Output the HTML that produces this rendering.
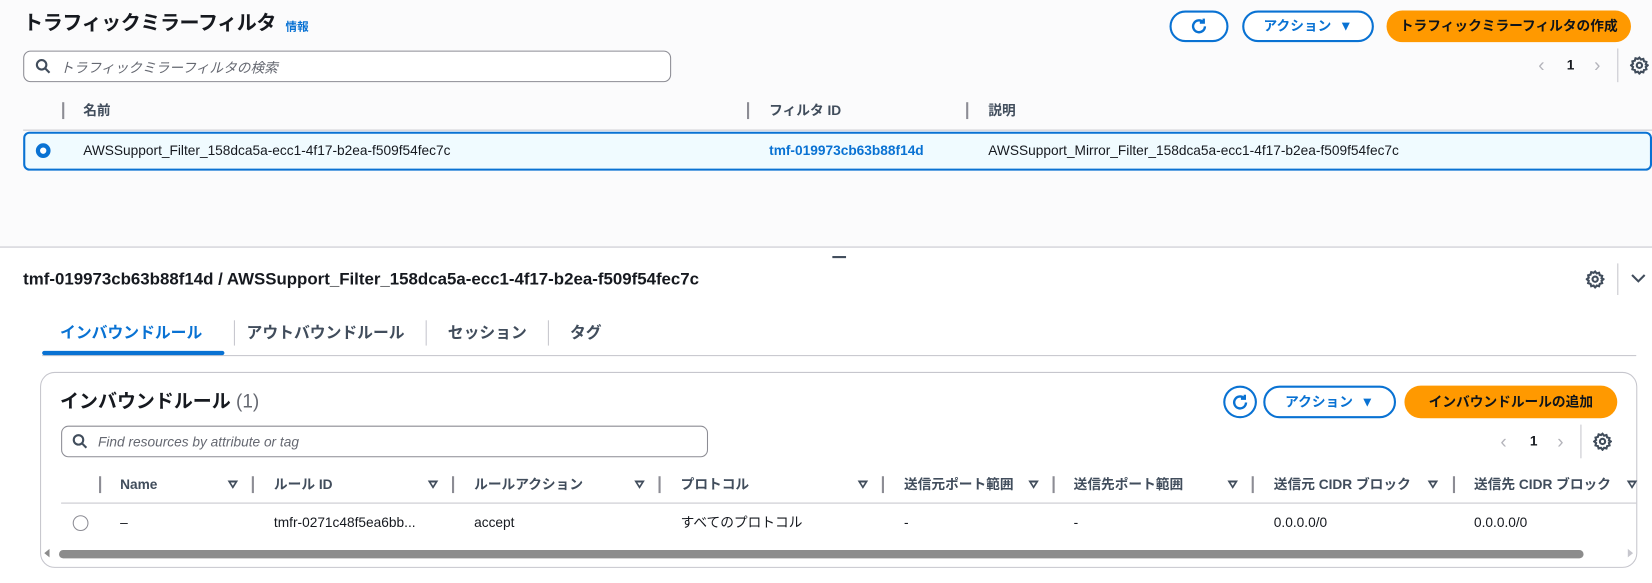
<!DOCTYPE html>
<html><head><meta charset="utf-8"><style>
*{box-sizing:border-box;margin:0;padding:0}
html,body{width:1652px;height:582px;overflow:hidden;background:#fff}
#w{position:absolute;left:0;top:0;width:1568px;height:553px;transform:scale(1.0536);transform-origin:0 0;font-family:"Liberation Sans","Noto Sans CJK JP",sans-serif;color:#16191f;font-size:13px}
.a{position:absolute;white-space:nowrap;line-height:16px}
.top{position:absolute;left:0;top:0;width:1568px;height:235px;background:#fbfbfc;border-bottom:1px solid #c6c6cd}
.btn{position:absolute;border:2px solid #0972d3;border-radius:20px;color:#0972d3;font-weight:bold;font-size:13px;display:flex;align-items:center;justify-content:center;background:#fff;line-height:16px}
.pri{position:absolute;background:#ff9900;border-radius:20px;color:#0f141a;font-weight:bold;font-size:13px;display:flex;align-items:center;justify-content:center;line-height:16px}
.search{position:absolute;border:1px solid #8c8c94;border-radius:7px;background:#fff;font-style:italic;color:#656871;font-size:13px;display:flex;align-items:center;padding-left:34px}
.sep{position:absolute;width:2px;height:16px;background:#8c8c94}
.hd{position:absolute;font-weight:bold;font-size:13px;color:#414d5c;white-space:nowrap;line-height:16px}
.tri{position:absolute;width:0;height:0;border-left:5px solid transparent;border-right:5px solid transparent;border-top:8px solid #414d5c}
.tri:after{content:"";position:absolute;left:-2px;top:-6px;border-left:2px solid transparent;border-right:2px solid transparent;border-top:3px solid #fff}
</style></head><body><div id="w">
<div class="top"></div>
<div class="a" style="left:22px;top:12px;font-size:19px;line-height:22px;font-weight:bold;letter-spacing:-0.4px">トラフィックミラーフィルタ</div>
<div class="a" style="left:271px;top:19px;font-size:11px;line-height:14px;font-weight:bold;color:#0972d3">情報</div>
<div class="btn" style="left:1110px;top:10px;width:56px;height:30px"><svg width="18" height="18" viewBox="0 0 16 16" fill="none" stroke="#0972d3" stroke-width="2"><path d="M13 8a5 5 0 1 1-1.6-3.7"/><path d="M12 1.5v3.3H8.7"/></svg></div>
<div class="btn" style="left:1179px;top:10px;width:125px;height:30px">アクション&nbsp;&nbsp;▼</div>
<div class="pri" style="left:1316px;top:10px;width:232px;height:30px">トラフィックミラーフィルタの作成</div>
<div class="search" style="left:22px;top:48px;width:615px;height:30px">トラフィックミラーフィルタの検索</div>
<svg class="a" style="left:33px;top:55px" width="16" height="16" viewBox="0 0 16 16" fill="none" stroke="#414d5c" stroke-width="2"><circle cx="6.5" cy="6.5" r="4.5"/><path d="M10 10l4 4"/></svg>
<div class="a" style="left:1460px;top:52px;color:#b4b4bb;font-size:18px;line-height:20px">‹</div>
<div class="a" style="left:1487px;top:54px;font-weight:bold">1</div>
<div class="a" style="left:1513px;top:52px;color:#b4b4bb;font-size:18px;line-height:20px">›</div>
<div class="a" style="left:1535px;top:46px;width:1px;height:32px;background:#c6c6cd"></div>
<svg class="a" style="left:1547px;top:53px" width="18" height="18" viewBox="0 0 16 16" fill="none" stroke="#414d5c" stroke-width="1.8"><circle cx="8" cy="8" r="2.2"/><path d="M8 1.5l1.3 1.6 2-.5.6 2 2 .6-.5 2L15 8l-1.6 1.3.5 2-2 .6-.6 2-2-.5L8 15l-1.3-1.6-2 .5-.6-2-2-.6.5-2L1 8l1.6-1.3-.5-2 2-.6.6-2 2 .5z"/></svg>
<div class="sep" style="left:59px;top:97px"></div>
<div class="sep" style="left:709px;top:97px"></div>
<div class="sep" style="left:917px;top:97px"></div>
<div class="hd" style="left:79px;top:97px">名前</div>
<div class="hd" style="left:730px;top:97px">フィルタ ID</div>
<div class="hd" style="left:938px;top:97px">説明</div>
<div class="a" style="left:22px;top:123px;width:1546px;height:1px;background:#c6c6cd"></div>
<div class="a" style="left:22px;top:125px;width:1546px;height:37px;border:2px solid #0972d3;border-radius:6px;background:#f0fbff"></div>
<div class="a" style="left:34px;top:136px;width:14px;height:14px;border-radius:50%;border:4px solid #0972d3;background:#fff"></div>
<div class="a" style="left:79px;top:135px">AWSSupport_Filter_158dca5a-ecc1-4f17-b2ea-f509f54fec7c</div>
<div class="a" style="left:730px;top:135px;color:#0972d3;font-weight:bold">tmf-019973cb63b88f14d</div>
<div class="a" style="left:938px;top:135px">AWSSupport_Mirror_Filter_158dca5a-ecc1-4f17-b2ea-f509f54fec7c</div>
<div class="a" style="left:790px;top:243px;width:13px;height:2px;background:#414d5c"></div>

<div class="a" style="left:22px;top:256px;font-size:16px;line-height:19px;font-weight:bold">tmf-019973cb63b88f14d / AWSSupport_Filter_158dca5a-ecc1-4f17-b2ea-f509f54fec7c</div>
<svg class="a" style="left:1505px;top:256px" width="18" height="18" viewBox="0 0 16 16" fill="none" stroke="#414d5c" stroke-width="1.8"><circle cx="8" cy="8" r="2.2"/><path d="M8 1.5l1.3 1.6 2-.5.6 2 2 .6-.5 2L15 8l-1.6 1.3.5 2-2 .6-.6 2-2-.5L8 15l-1.3-1.6-2 .5-.6-2-2-.6.5-2L1 8l1.6-1.3-.5-2 2-.6.6-2 2 .5z"/></svg>
<div class="a" style="left:1535px;top:250px;width:1px;height:30px;background:#c6c6cd"></div>
<svg class="a" style="left:1548px;top:259px" width="14" height="10" viewBox="0 0 14 10" fill="none" stroke="#414d5c" stroke-width="2"><path d="M1 2l6 6 6-6"/></svg>

<div class="a" style="left:57px;top:307px;font-size:15px;line-height:20px;font-weight:bold;color:#0972d3">インバウンドルール</div>
<div class="a" style="left:234px;top:307px;font-size:15px;line-height:20px;font-weight:bold;color:#414d5c">アウトバウンドルール</div>
<div class="a" style="left:425px;top:307px;font-size:15px;line-height:20px;font-weight:bold;color:#414d5c">セッション</div>
<div class="a" style="left:541px;top:307px;font-size:15px;line-height:20px;font-weight:bold;color:#414d5c">タグ</div>
<div class="a" style="left:222px;top:304px;width:1px;height:24px;background:#c6c6cd"></div>
<div class="a" style="left:404px;top:304px;width:1px;height:24px;background:#c6c6cd"></div>
<div class="a" style="left:520px;top:304px;width:1px;height:24px;background:#c6c6cd"></div>
<div class="a" style="left:40px;top:337px;width:1513px;height:1px;background:#c6c6cd"></div>
<div class="a" style="left:40px;top:333px;width:173px;height:4px;background:#0972d3;border-radius:2px"></div>

<div class="a" style="left:38px;top:353px;width:1516px;height:186px;border:1px solid #c6c6cd;border-radius:14px"></div>
<div class="a" style="left:57px;top:369px;font-size:18px;line-height:24px;font-weight:bold">インバウンドルール <span style="font-weight:normal;color:#656871">(1)</span></div>
<div class="btn" style="left:1161px;top:366px;width:32px;height:31px;border-radius:50%"><svg width="18" height="18" viewBox="0 0 16 16" fill="none" stroke="#0972d3" stroke-width="2"><path d="M13 8a5 5 0 1 1-1.6-3.7"/><path d="M12 1.5v3.3H8.7"/></svg></div>
<div class="btn" style="left:1199px;top:366px;width:126px;height:31px">アクション&nbsp;&nbsp;▼</div>
<div class="pri" style="left:1333px;top:366px;width:202px;height:31px">インバウンドルールの追加</div>
<div class="search" style="left:58px;top:404px;width:614px;height:30px">Find resources by attribute or tag</div>
<svg class="a" style="left:68px;top:411px" width="16" height="16" viewBox="0 0 16 16" fill="none" stroke="#414d5c" stroke-width="2"><circle cx="6.5" cy="6.5" r="4.5"/><path d="M10 10l4 4"/></svg>
<div class="a" style="left:1424px;top:409px;color:#b4b4bb;font-size:18px;line-height:20px">‹</div>
<div class="a" style="left:1452px;top:411px;font-weight:bold">1</div>
<div class="a" style="left:1478px;top:409px;color:#b4b4bb;font-size:18px;line-height:20px">›</div>
<div class="a" style="left:1500px;top:403px;width:1px;height:32px;background:#c6c6cd"></div>
<svg class="a" style="left:1512px;top:410px" width="18" height="18" viewBox="0 0 16 16" fill="none" stroke="#414d5c" stroke-width="1.8"><circle cx="8" cy="8" r="2.2"/><path d="M8 1.5l1.3 1.6 2-.5.6 2 2 .6-.5 2L15 8l-1.6 1.3.5 2-2 .6-.6 2-2-.5L8 15l-1.3-1.6-2 .5-.6-2-2-.6.5-2L1 8l1.6-1.3-.5-2 2-.6.6-2 2 .5z"/></svg>

<div class="sep" style="left:94px;top:452px"></div>
<div class="sep" style="left:239px;top:452px"></div>
<div class="sep" style="left:429px;top:452px"></div>
<div class="sep" style="left:625px;top:452px"></div>
<div class="sep" style="left:837px;top:452px"></div>
<div class="sep" style="left:999px;top:452px"></div>
<div class="sep" style="left:1188px;top:452px"></div>
<div class="sep" style="left:1379px;top:452px"></div>
<div class="hd" style="left:114px;top:452px">Name</div>
<div class="hd" style="left:260px;top:452px">ルール ID</div>
<div class="hd" style="left:450px;top:452px">ルールアクション</div>
<div class="hd" style="left:646px;top:452px">プロトコル</div>
<div class="hd" style="left:858px;top:452px">送信元ポート範囲</div>
<div class="hd" style="left:1019px;top:452px">送信先ポート範囲</div>
<div class="hd" style="left:1209px;top:452px">送信元 CIDR ブロック</div>
<div class="hd" style="left:1399px;top:452px">送信先 CIDR ブロック</div>
<div class="tri" style="left:216px;top:456px"></div>
<div class="tri" style="left:406px;top:456px"></div>
<div class="tri" style="left:602px;top:456px"></div>
<div class="tri" style="left:814px;top:456px"></div>
<div class="tri" style="left:976px;top:456px"></div>
<div class="tri" style="left:1165px;top:456px"></div>
<div class="tri" style="left:1355px;top:456px"></div>
<div class="tri" style="left:1544px;top:456px"></div>
<div class="a" style="left:58px;top:477px;width:1495px;height:1px;background:#c6c6cd"></div>
<div class="a" style="left:69px;top:489px;width:15px;height:15px;border-radius:50%;border:1px solid #8c8c94"></div>
<div class="a" style="left:114px;top:488px">–</div>
<div class="a" style="left:260px;top:488px">tmfr-0271c48f5ea6bb...</div>
<div class="a" style="left:450px;top:488px">accept</div>
<div class="a" style="left:646px;top:488px">すべてのプロトコル</div>
<div class="a" style="left:858px;top:488px">-</div>
<div class="a" style="left:1019px;top:488px">-</div>
<div class="a" style="left:1209px;top:488px">0.0.0.0/0</div>
<div class="a" style="left:1399px;top:488px">0.0.0.0/0</div>
<div class="a" style="left:42px;top:521px;width:0;height:0;border-top:4px solid transparent;border-bottom:4px solid transparent;border-right:5px solid #8c8c8c"></div>
<div class="a" style="left:56px;top:522px;width:1447px;height:8px;background:#8c8c8c;border-radius:4px"></div>
<div class="a" style="left:1545px;top:521px;width:0;height:0;border-top:4px solid transparent;border-bottom:4px solid transparent;border-left:5px solid #c6c6cd"></div>
</div></body></html>
